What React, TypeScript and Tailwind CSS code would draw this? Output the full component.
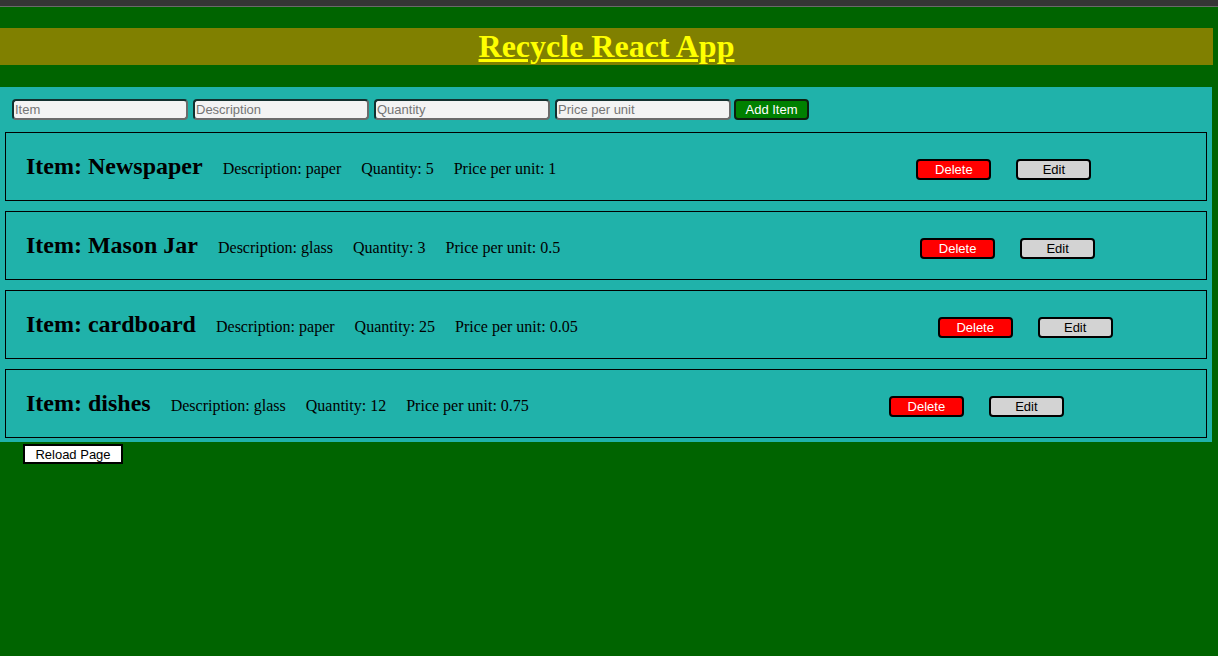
import { useState } from 'react';

interface Item {
  name: string;
  description: string;
  quantity: string;
  price: string;
}

const ITEMS: Item[] = [
  { name: 'Newspaper', description: 'paper', quantity: '5', price: '1' },
  { name: 'Mason Jar', description: 'glass', quantity: '3', price: '0.5' },
  { name: 'cardboard', description: 'paper', quantity: '25', price: '0.05' },
  { name: 'dishes', description: 'glass', quantity: '12', price: '0.75' },
];

const sans = 'font-["Liberation_Sans",Arial,sans-serif]';
const serif = 'font-["Liberation_Serif","Times_New_Roman",serif]';

function ItemCard({ item }: { item: Item }) {
  return (
    <div className={`h-[69px] border border-black pt-[20px] pl-[20px] flex items-baseline text-black ${serif}`}>
      <h2 className="text-[24px] font-bold leading-[27px]">Item: {item.name}</h2>
      <span className="ml-[20px] text-[16px]">Description: {item.description}</span>
      <span className="ml-[20px] text-[16px]">Quantity: {item.quantity}</span>
      <span className="ml-[20px] text-[16px]">Price per unit: {item.price}</span>
      <button
        className={`ml-[360px] w-[75px] h-[21px] rounded-[4px] border-2 border-black bg-[#ff0000] text-white text-[13px] leading-none ${sans}`}
      >
        Delete
      </button>
      <button
        className={`ml-[25px] w-[75px] h-[21px] rounded-[4px] border-2 border-black bg-[#d3d3d3] text-black text-[13px] leading-none ${sans}`}
      >
        Edit
      </button>
    </div>
  );
}

export default function App() {
  const [items] = useState(ITEMS);
  const inputClass = `h-[21px] w-[176px] rounded-[4px] border-2 border-t-[#13302f] border-l-[#13302f] border-b-[#6b6b6b] border-r-[#6b6b6b] bg-[#f3f3f3] px-[1px] text-[13px] text-black placeholder:text-[#757575] ${sans}`;

  return (
    <div className="min-h-screen bg-[#006400]">
      <div className="h-[7px] bg-[#353535] border-b border-[#6a6a6a]" />
      <h1
        className={`w-[1213px] mt-[21px] mb-[22px] bg-[#808000] text-center text-[32px] leading-[37px] font-bold text-[#ffff00] underline ${serif}`}
      >
        Recycle React App
      </h1>

      <div className="w-[1212px] bg-[#20b2aa] pt-[12px] px-[5px] pb-[4px]">
        <div className="flex pl-[7px]">
          <input className={`${inputClass} mr-[5px]`} placeholder="Item" />
          <input className={`${inputClass} mr-[5px]`} placeholder="Description" />
          <input className={`${inputClass} mr-[5px]`} placeholder="Quantity" />
          <input className={`${inputClass} mr-[3px]`} placeholder="Price per unit" />
          <button
            className={`w-[75px] h-[21px] rounded-[4px] border-2 border-[#0d1f0d] bg-[#008000] text-white text-[13px] leading-none ${sans}`}
          >
            Add Item
          </button>
        </div>

        <div className="mt-[12px] flex flex-col gap-[10px]">
          {items.map((item) => (
            <ItemCard key={item.name} item={item} />
          ))}
        </div>
      </div>

      <button
        className={`block ml-[23px] mt-[2px] w-[100px] h-[20px] border-2 border-black bg-white text-black text-[13px] leading-none ${sans}`}
      >
        Reload Page
      </button>
    </div>
  );
}
